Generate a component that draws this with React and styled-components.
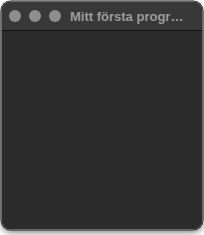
import React from "react";
import styled, { createGlobalStyle } from "styled-components";

const Global = createGlobalStyle`
  html, body { margin: 0; padding: 0; background: #ffffff; }
  body { font-family: "Liberation Sans", Arial, sans-serif; }
`;

const Page = styled.div`
  width: 204px;
  height: 235px;
  padding: 1px 1px 0 1px;
  box-sizing: border-box;
`;

const Window = styled.div`
  width: 202px;
  height: 229px;
  box-sizing: border-box;
  border-radius: 10px;
  background: #2b2b2b;
  border: 1px solid #6a6a6a;
  box-shadow: 0 0 0 0.5px #1a1a1a, 0 3px 6px rgba(0, 0, 0, 0.45);
  overflow: hidden;
  display: flex;
  flex-direction: column;
`;

const TitleBar = styled.div`
  height: 28px;
  flex: none;
  background: #383838;
  border-bottom: 1px solid #111111;
  display: flex;
  align-items: center;
  padding: 0 0 0 7px;
  gap: 8px;
`;

const Light = styled.span`
  width: 12px;
  height: 12px;
  border-radius: 50%;
  background: #8e8e8e;
  flex: none;
`;

const Title = styled.div`
  margin-left: 1px;
  font-size: 13px;
  font-weight: bold;
  color: #9b9b9b;
  white-space: nowrap;
  overflow: hidden;
  text-overflow: ellipsis;
  min-width: 0;
  padding-right: 16px;
`;

const Body = styled.div`
  flex: 1;
  background: #2b2b2b;
`;

export default function App() {
  return (
    <>
      <Global />
      <Page>
        <Window>
          <TitleBar>
            <Light />
            <Light />
            <Light />
            <Title>Mitt första program</Title>
          </TitleBar>
          <Body />
        </Window>
      </Page>
    </>
  );
}
